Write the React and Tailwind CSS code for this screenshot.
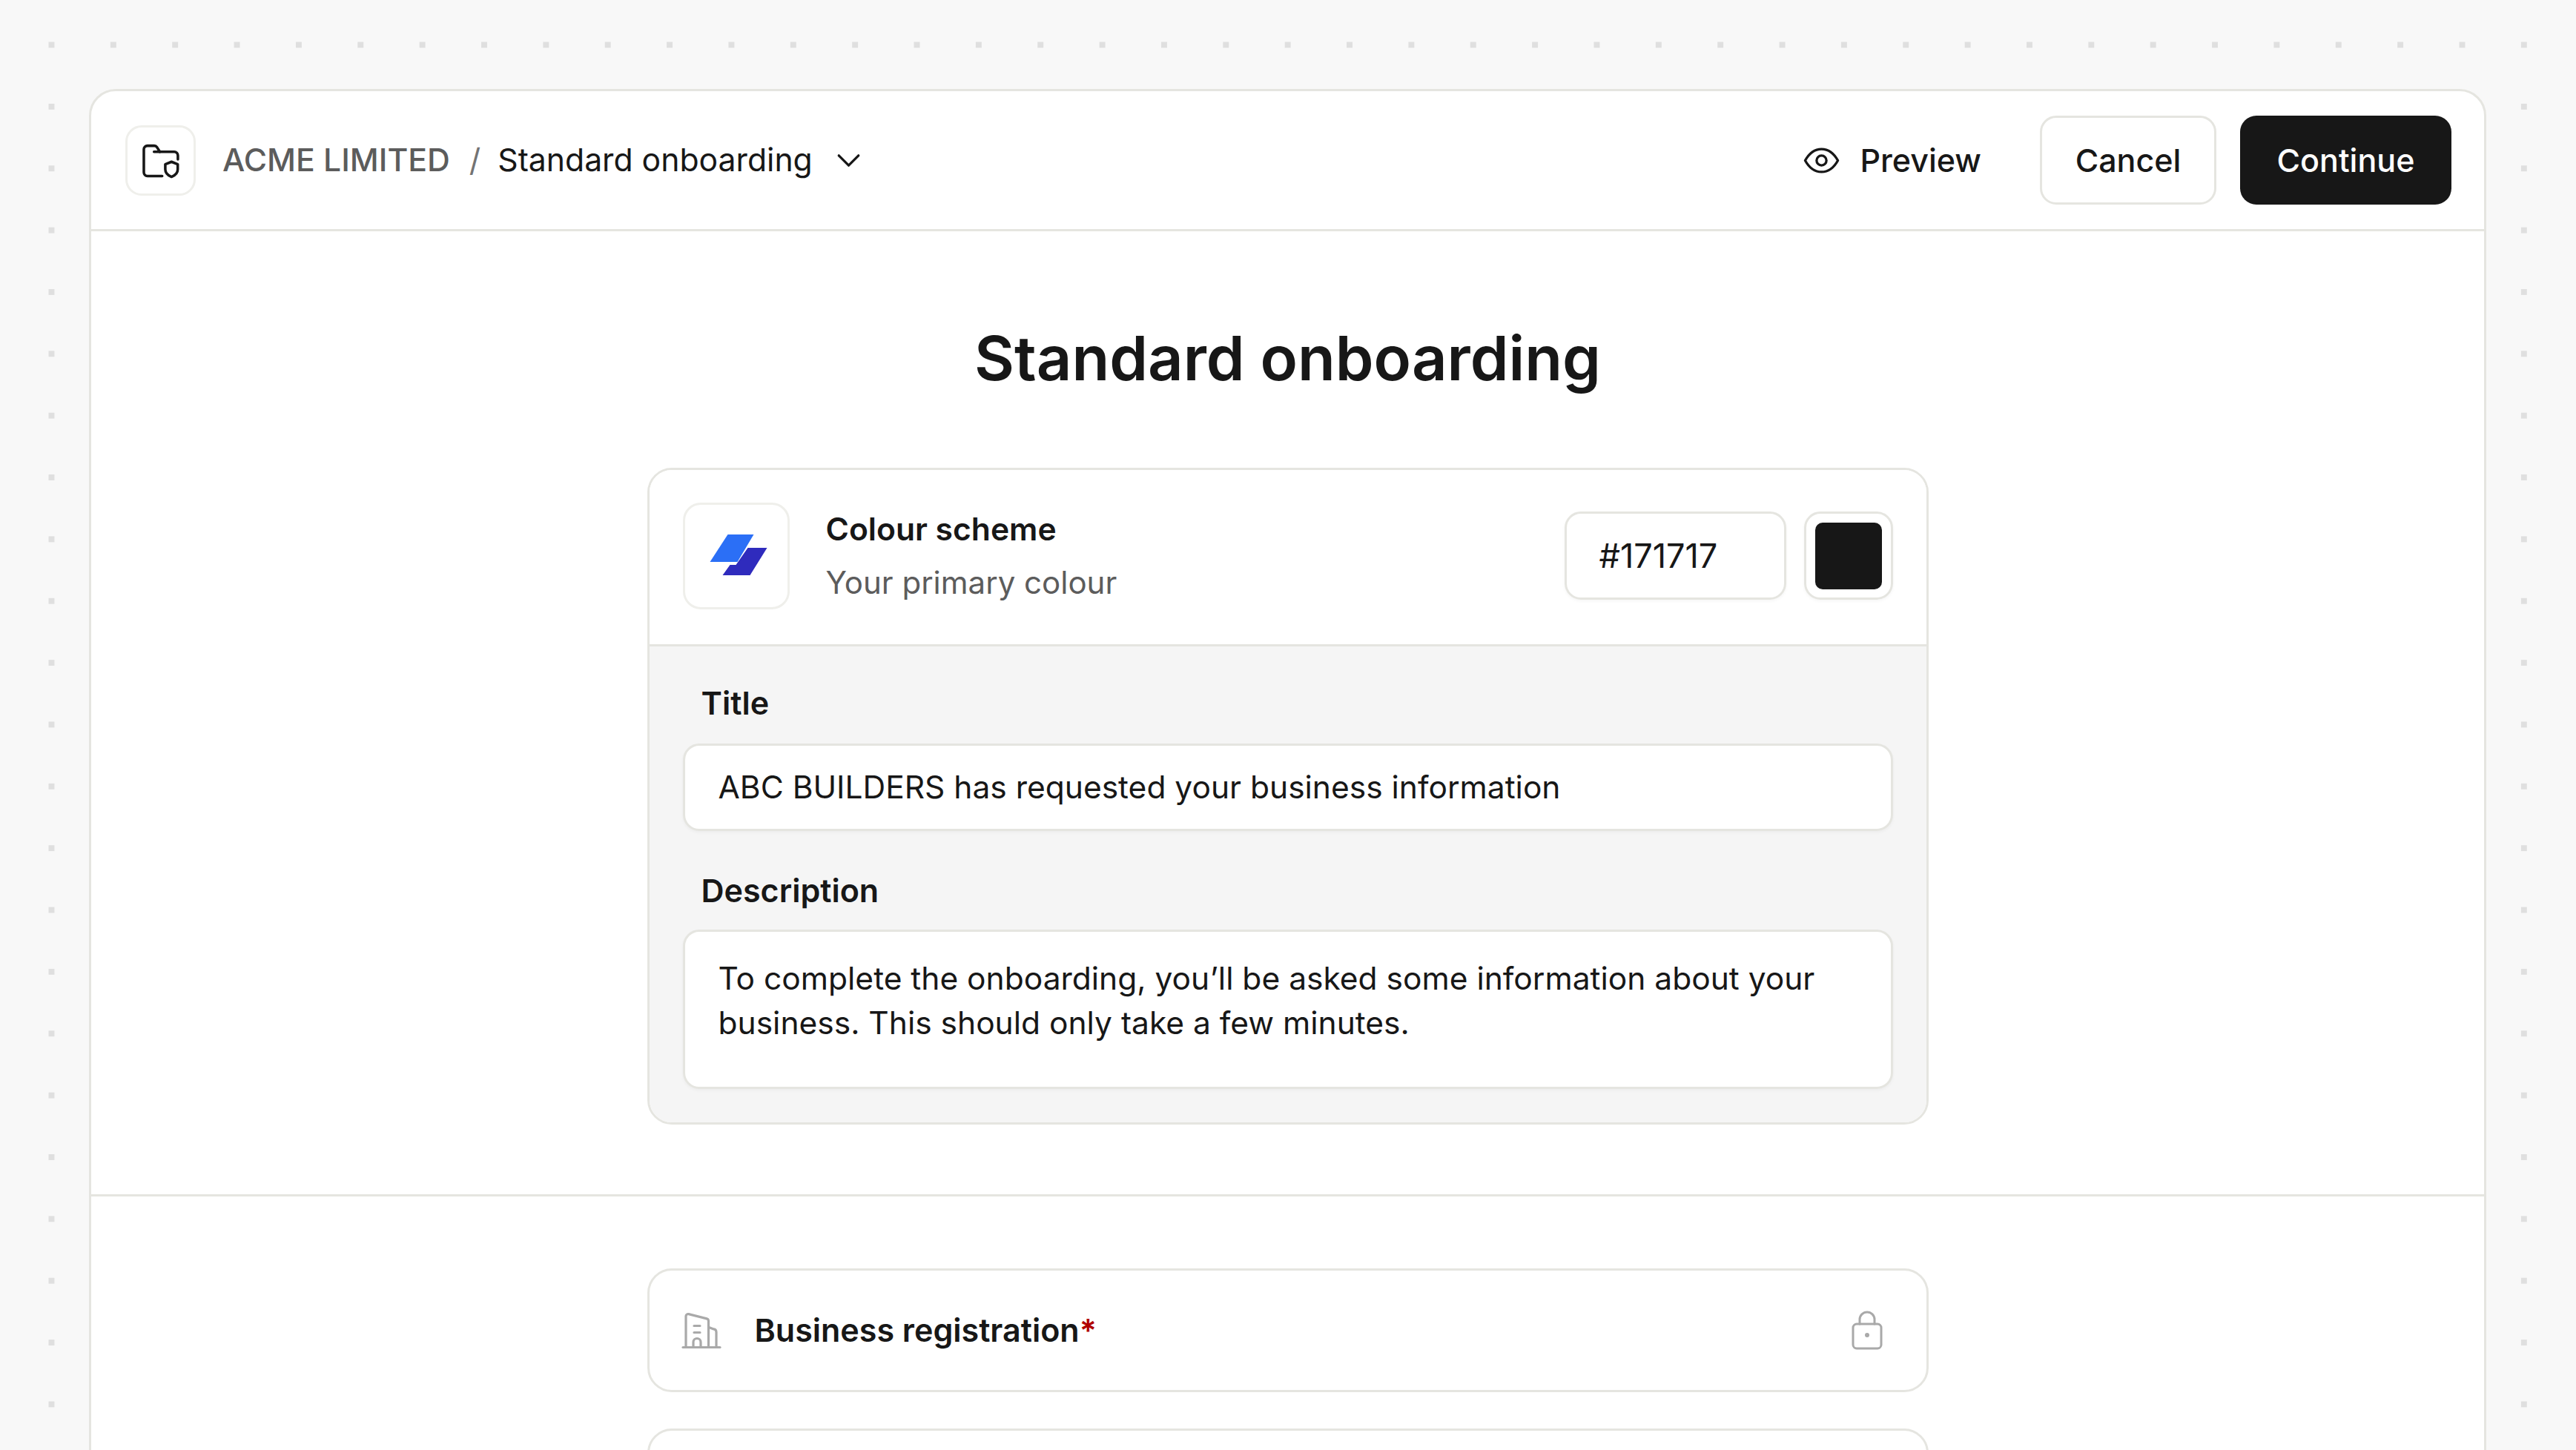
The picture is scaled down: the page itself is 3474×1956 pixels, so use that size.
import React from 'react'

const FONT = "font-['Inter','Liberation_Sans',sans-serif]"

function FolderIcon() {
  return (
    <svg width="53" height="53" viewBox="0 0 24 24" fill="none" stroke="#171717" strokeWidth="1.6" strokeLinecap="round" strokeLinejoin="round">
      <path d="M13 21.5H4a2.2 2.2 0 0 1-2.2-2.2V5.2A2.2 2.2 0 0 1 4 3h4.2c.7 0 1.3.4 1.7 1l1.7 2.7" />
      <path d="M8 6.7h12.4a2.2 2.2 0 0 1 2.2 2.2v2.4" />
      <path d="M18.7 12.8l3.8 1.5v3.1c0 2.3-1.6 3.7-3.8 4.6-2.2-.9-3.8-2.3-3.8-4.6v-3.1z" />
    </svg>
  )
}

function ChevronIcon() {
  return (
    <svg width="53" height="53" viewBox="0 0 24 24" fill="none" stroke="#171717" strokeWidth="1.5" strokeLinecap="round" strokeLinejoin="round">
      <path d="M6 9l6 6 6-6" />
    </svg>
  )
}

function EyeIcon() {
  return (
    <svg width="53" height="53" viewBox="0 0 24 24" fill="none" stroke="#171717" strokeWidth="1.5" strokeLinecap="round" strokeLinejoin="round">
      <path d="M2 12C4.5 7.5 8 5 12 5s7.5 2.5 10 7c-2.500 4.500-6 7-10 7s-7.500-2.500-10-7z" />
      <circle cx="12" cy="12" r="3" />
    </svg>
  )
}

function LogoMark() {
  return (
    <svg width="90" height="80" viewBox="0 0 90 80">
      <polygon points="33.5,11 68.5,11 46.500,48 9.500,48" fill="#2b6ff6" />
      <polygon points="60.500,29 86.500,29 63.500,66 26.500,66 36.500,52 44.500,52" fill="#2f2bbd" />
    </svg>
  )
}

function BuildingIcon() {
  return (
    <svg width="70" height="70" viewBox="0 -1.500 70 70" fill="none" stroke="#a9a9a9" strokeWidth="3.2" strokeLinecap="round" strokeLinejoin="round">
      <path d="M10 56h50" />
      <path d="M14 56V14a3 3 0 0 1 3.700-2.900l24.500 6.300a3 3 0 0 1 2.300 2.900V56" />
      <path d="M45 29l6.500 2.400a4 4 0 0 1 3.500 4V56" />
      <path d="M24 56V49a5 5 0 0 1 10 0v7" />
      <path d="M25 27h8M25 36h8" />
    </svg>
  )
}

function LockIcon() {
  return (
    <svg width="60" height="65" viewBox="0 2 60 65" fill="none" stroke="#a9a9a9" strokeWidth="3" strokeLinecap="round" strokeLinejoin="round">
      <rect x="13" y="26" width="38" height="33" rx="5" />
      <path d="M22 26V20a10 10 0 0 1 20 0v6" />
      <circle cx="32" cy="41" r="1.500" fill="#a9a9a9" />
    </svg>
  )
}

export default function App() {
  return (
    <div className={`${FONT} h-[1956px] w-[3474px] overflow-hidden pl-[120px] pt-[120px] text-[#171717] bg-[#f8f8f8] bg-[linear-gradient(to_bottom,#f8f8f8_75.87px,transparent_75.87px),linear-gradient(to_right,#dfdfdf_7.5px,transparent_7.5px)] bg-[size:83.37px_83.37px] bg-[position:65.5px_-18.9px]`}>
      <div className="w-[3233px] rounded-t-[36px] border-[3px] border-[#e5e5e0] bg-white">
        {/* Barra superior */}
        <header className="flex h-[189px] items-center justify-between border-b-[3px] border-[#e5e5e0] pr-[44px] pl-[46px]">
          <div className="flex items-center">
            <div className="flex h-[95px] w-[95px] items-center justify-center rounded-[22px] border-[3px] border-[#efefeb]">
              <FolderIcon />
            </div>
            <span className="ml-[36px] text-[42.7px] font-medium text-[#5c5c5c]">ACME LIMITED</span>
            <span className="ml-[26px] text-[42.7px] text-[#737373]">/</span>
            <span className="ml-[23px] text-[42.7px]">Standard onboarding</span>
            <span className="ml-[22px] flex"><ChevronIcon /></span>
          </div>
          <div className="flex items-center">
            <EyeIcon />
            <span className="ml-[25px] text-[43px] font-medium">Preview</span>
            <button className="ml-[79px] h-[120px] w-[238px] rounded-[22px] border-[3px] border-[#e5e5e0] bg-white text-[43px] font-medium">Cancel</button>
            <button className="ml-[32px] h-[120px] w-[285px] rounded-[22px] bg-[#171717] text-[43px] font-medium text-white">Continue</button>
          </div>
        </header>

        {/* Personalización */}
        <section className="border-b-[3px] border-[#e5e5e0] pt-[121px] pb-[94px]">
          <h1 className="mb-[98px] text-center text-[83px] leading-[100px] font-semibold">Standard onboarding</h1>
          <div className="mx-auto w-[1728px] overflow-hidden rounded-[33px] border-[3px] border-[#e5e5e0]">
            <div className="flex h-[238px] items-center border-b-[3px] border-[#e5e5e0] bg-white px-[45px] pb-[4px]">
              <div className="flex h-[144px] w-[144px] items-center justify-center rounded-[24px] border-[3px] border-[#efefeb]">
                <LogoMark />
              </div>
              <div className="ml-[49px] flex-1">
                <div className="text-[42.6px] leading-[72px] font-semibold">Colour scheme</div>
                <div className="text-[42px] leading-[72px] text-[#5c5c5c]">Your primary colour</div>
              </div>
              <div className="flex h-[119px] w-[299px] items-center rounded-[22px] border-[3px] border-[#e5e5e0] pl-[44px] text-[45px] shadow-[0_2px_4px_rgba(0,0,0,0.04)]">#171717</div>
              <div className="ml-[24px] flex h-[119px] w-[120px] items-center justify-center rounded-[22px] border-[3px] border-[#e5e5e0] shadow-[0_2px_4px_rgba(0,0,0,0.04)]">
                <div className="h-[90px] w-[90px] rounded-[10px] bg-[#171717]"></div>
              </div>
            </div>
            <div className="bg-[#f5f5f5] px-[45px] pt-[48px] pb-[45px]">
              <div className="mb-[27px] pl-[25px] text-[43px] leading-[56px] font-semibold">Title</div>
              <div className="flex h-[118px] items-center rounded-[22px] border-[3px] border-[#e5e5e0] bg-white pl-[45px] text-[42.5px] shadow-[0_2px_4px_rgba(0,0,0,0.04)]">
                ABC BUILDERS has requested your business information
              </div>
              <div className="mt-[52px] mb-[25px] pl-[25px] text-[43px] leading-[56px] font-semibold">Description</div>
              <div className="h-[215px] rounded-[22px] border-[3px] border-[#e5e5e0] bg-white px-[45px] pt-[33px] text-[42.5px] leading-[60px] shadow-[0_2px_4px_rgba(0,0,0,0.04)]">
                To complete the onboarding, you’ll be asked some information about your business. This should only take a few minutes.
              </div>
            </div>
          </div>
        </section>

        {/* Pasos */}
        <section className="pt-[97px]">
          <div className="mx-auto flex h-[167px] w-[1728px] items-center rounded-[33px] border-[3px] border-[#e5e5e0] pr-[52px] pl-[35px]">
            <BuildingIcon />
            <span className="ml-[37px] flex-1 text-[43px] font-semibold">
              Business registration<span className="text-[#b00000]">*</span>
            </span>
            <LockIcon />
          </div>
          <div className="mx-auto mt-[49px] h-[166px] w-[1728px] rounded-[33px] border-[3px] border-[#e5e5e0]"></div>
        </section>
      </div>
    </div>
  )
}
